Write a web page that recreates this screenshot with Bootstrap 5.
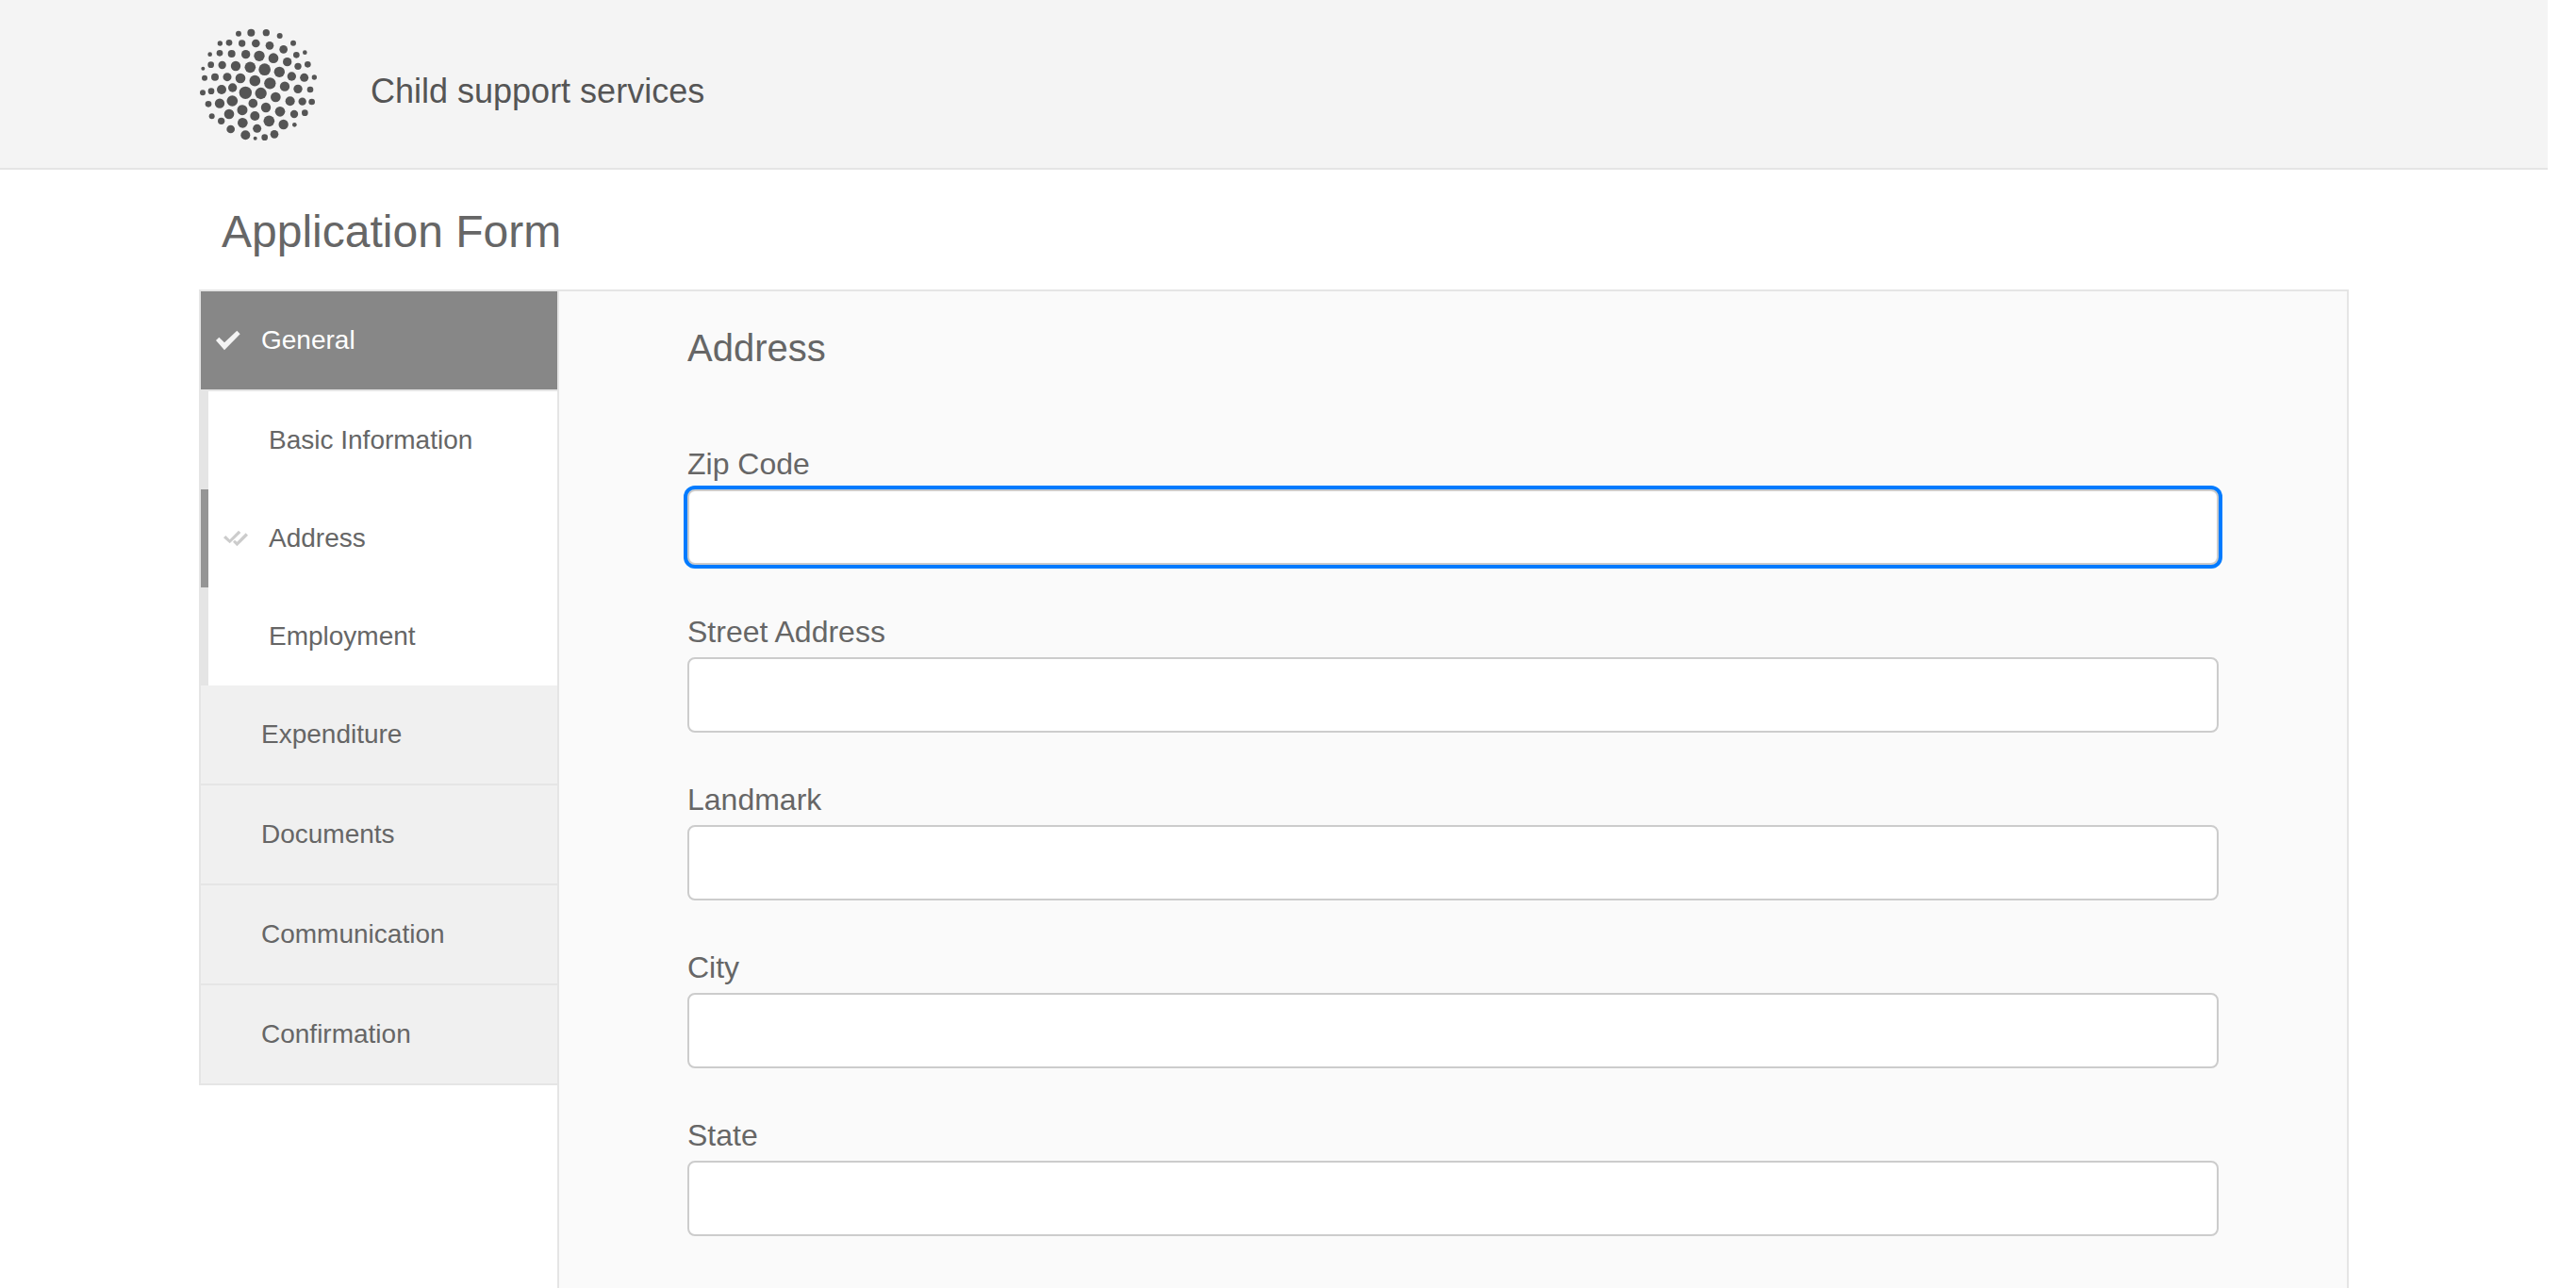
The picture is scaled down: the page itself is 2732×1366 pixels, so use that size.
<!DOCTYPE html>
<html lang="en">
<head>
<meta charset="utf-8">
<meta name="viewport" content="width=device-width, initial-scale=1">
<title>Child support services</title>
<link href="https://cdn.jsdelivr.net/npm/bootstrap@5.3.0/dist/css/bootstrap.min.css" rel="stylesheet">
<style>
  body { font-family: "Liberation Sans", Arial, sans-serif; color: #666; background: #fff; padding-right: 30px; }
  .shell { width: 100%; max-width: 2280px; margin: 0 auto; }
  .site-head { background: #f4f4f4; border-bottom: 2px solid #e5e5e5; color: #555; padding: 29px 0; }
  .brand { gap: 56px; color: inherit; }
  .brand svg { width: 126px; height: 120px; fill: #555; }
  .brand span { font-size: 36px; line-height: 56px; padding-top: 16px; }
  .form-title { font-size: 48px; line-height: 60px; font-weight: 400; padding: 36px 24px 31px; margin: 0; }
  .steps { border: 2px solid #e5e5e5; border-right: 0; }
  .step { height: 104px; font-size: 28px; line-height: 32px; color: #666; background: #f0f0f0; text-decoration: none; }
  .step svg { width: 26px; height: 22px; }
  .slot { width: 64px; padding-left: 16px; flex: none; line-height: 0; }
  .divided { border-top: 2px solid #e5e5e5; height: 106px; }
  .step-done { background: #878787; color: #fff; border-bottom: 2px solid #e5e5e5; height: 106px; }
  .substep { background: #fff; border-left: 8px solid #e5e5e5; }
  .substep.current { border-left-color: #959595; }
  .sheet { background: #fafafa; border: 2px solid #e5e5e5; border-bottom: 0; padding: 36px 136px 24px; }
  .sheet h2 { font-size: 40px; line-height: 48px; font-weight: 400; margin-bottom: 72px; }
  .field { margin-bottom: 44px; }
  .field .form-label { display: block; font-size: 32px; line-height: 54px; margin: 0; }
  .field .form-control { height: 80px; border: 2px solid #ccc; border-radius: 8px; font-size: 32px; color: #666; background: #fff; padding: 8px 16px; }
  .field .form-control:focus, .field .form-control.focused { border-color: #ccc; box-shadow: 0 0 0 4px #007bff; }
</style>
<script src="https://cdn.jsdelivr.net/npm/bootstrap@5.3.0/dist/js/bootstrap.bundle.min.js"></script>
</head>
<body class="min-vh-100 d-flex flex-column">
<header class="site-head">
  <div class="shell">
    <a href="#" class="brand d-inline-flex align-items-center text-decoration-none align-top">
      <svg viewBox="33 27 378 360" role="img" aria-label="Logo">
        <circle cx="159" cy="47" r="9"/><circle cx="199" cy="44" r="12"/><circle cx="247" cy="44" r="11"/><circle cx="290" cy="54" r="9"/>
        <circle cx="100" cy="78" r="8"/><circle cx="129" cy="76" r="10"/><circle cx="170" cy="78" r="11"/><circle cx="214" cy="78" r="13"/><circle cx="258" cy="85" r="13"/><circle cx="302" cy="97" r="13"/><circle cx="333" cy="77" r="9"/>
        <circle cx="68" cy="113" r="7"/><circle cx="99" cy="109" r="10"/><circle cx="137" cy="111" r="12"/><circle cx="182" cy="113" r="14"/><circle cx="225" cy="118" r="17"/><circle cx="270" cy="125" r="16"/><circle cx="314" cy="137" r="14"/><circle cx="343" cy="115" r="10"/><circle cx="370" cy="107" r="7"/>
        <circle cx="46" cy="158" r="6"/><circle cx="71" cy="146" r="10"/><circle cx="107" cy="147" r="12.500"/><circle cx="150" cy="150" r="15.500"/><circle cx="196" cy="154" r="17.500"/><circle cx="242" cy="161" r="19"/><circle cx="289" cy="169" r="17"/><circle cx="348" cy="151" r="11"/><circle cx="379" cy="145" r="10"/>
        <circle cx="51" cy="188" r="9"/><circle cx="84" cy="185" r="12"/><circle cx="123" cy="185" r="13.500"/><circle cx="165" cy="189" r="16"/><circle cx="211" cy="197" r="17.500"/><circle cx="259" cy="205" r="18.500"/><circle cx="306" cy="215" r="15.500"/><circle cx="328" cy="183" r="14"/><circle cx="368" cy="187" r="13.500"/><circle cx="400" cy="186" r="8"/>
        <circle cx="45" cy="235" r="9"/><circle cx="72" cy="230" r="10"/><circle cx="105" cy="225" r="15"/><circle cx="140" cy="219" r="14"/><circle cx="181" cy="235" r="20"/><circle cx="230" cy="237" r="18.500"/><circle cx="277" cy="249" r="16"/><circle cx="348" cy="223" r="14"/><circle cx="387" cy="225" r="10"/>
        <circle cx="63" cy="271" r="10"/><circle cx="99" cy="269" r="15.500"/><circle cx="139" cy="261" r="17.500"/><circle cx="205" cy="269" r="14.500"/><circle cx="246" cy="282" r="15.500"/><circle cx="323" cy="262" r="15"/><circle cx="362" cy="263" r="12.500"/><circle cx="392" cy="264" r="10"/>
        <circle cx="74" cy="310" r="9"/><circle cx="104" cy="325" r="11"/><circle cx="129" cy="303" r="16"/><circle cx="171" cy="290" r="16.500"/><circle cx="211" cy="309" r="15"/><circle cx="291" cy="295" r="16"/><circle cx="336" cy="303" r="12.500"/><circle cx="370" cy="299" r="10"/>
        <circle cx="134" cy="351" r="13"/><circle cx="172" cy="331" r="16"/><circle cx="218" cy="349" r="13.500"/><circle cx="256" cy="325" r="17.500"/><circle cx="302" cy="336" r="15.500"/><circle cx="337" cy="337" r="7"/>
        <circle cx="181" cy="370" r="15"/><circle cx="212" cy="380" r="6"/><circle cx="242" cy="377" r="10"/><circle cx="273" cy="367" r="13"/>
      </svg>
      <span>Child support services</span>
    </a>
  </div>
</header>

<main class="shell flex-grow-1 d-flex flex-column">
  <h1 class="form-title">Application Form</h1>
  <div class="row g-0 flex-grow-1">
    <div class="col-2">
      <nav class="steps d-flex flex-column" aria-label="Form sections">
        <a href="#" class="step step-done d-flex align-items-center">
          <span class="slot"><svg viewBox="88 450 78 66" aria-hidden="true"><path fill="#f4f4f4" d="M88 483l10-10 17 17 40-38 10 11-50 51z"/></svg></span>General</a>
        <a href="#" class="step substep d-flex align-items-center"><span class="slot"></span>Basic Information</a>
        <a href="#" class="step substep current d-flex align-items-center" aria-current="step">
          <span class="slot"><svg viewBox="111 449 78 66" aria-hidden="true"><path fill="#ccc" d="M111 480l7-7 13 13 28-29 7 7-35 34zM141 493l6-6 7 6 28-28 7 7-35 35z"/></svg></span>Address</a>
        <a href="#" class="step substep d-flex align-items-center"><span class="slot"></span>Employment</a>
        <a href="#" class="step d-flex align-items-center"><span class="slot"></span>Expenditure</a>
        <a href="#" class="step divided d-flex align-items-center"><span class="slot"></span>Documents</a>
        <a href="#" class="step divided d-flex align-items-center"><span class="slot"></span>Communication</a>
        <a href="#" class="step divided d-flex align-items-center"><span class="slot"></span>Confirmation</a>
      </nav>
    </div>
    <form class="col-10 sheet">
      <h2>Address</h2>
      <div class="field"><label class="form-label" for="zip">Zip Code</label><input class="form-control focused" type="text" id="zip"></div>
      <div class="field"><label class="form-label" for="street">Street Address</label><input class="form-control" type="text" id="street"></div>
      <div class="field"><label class="form-label" for="landmark">Landmark</label><input class="form-control" type="text" id="landmark"></div>
      <div class="field"><label class="form-label" for="city">City</label><input class="form-control" type="text" id="city"></div>
      <div class="field mb-0"><label class="form-label" for="state">State</label><input class="form-control" type="text" id="state"></div>
    </form>
  </div>
</main>
</body>
</html>
